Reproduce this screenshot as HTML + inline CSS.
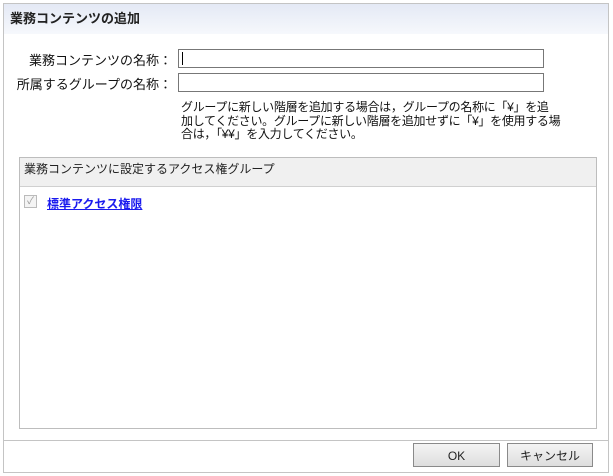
<!DOCTYPE html>
<html><head><meta charset="utf-8"><style>
body{margin:0;width:613px;height:476px;background:#fff;font-family:"Liberation Sans","Noto Sans CJK JP",sans-serif;font-size:12px;color:#222;position:relative;overflow:hidden}
.a{position:absolute}
.outer{left:3px;top:3px;width:604px;height:468px;border:1px solid #c4c4c4}
.title{left:4px;top:4px;width:604px;height:30px;background:linear-gradient(#e4e9f5,#f6f8fc);font-weight:bold;font-size:13px;line-height:30px;padding-left:6px;box-sizing:border-box}
.lbl{text-align:right;width:172px;left:0;font-size:13px;color:#111}
.inp{left:178px;width:364px;height:17px;border:1px solid #777;background:#fff}
.help{left:181px;top:101px;font-size:12px;line-height:13.5px;letter-spacing:-0.3px;color:#111}
.box{left:19px;top:157px;width:576px;height:270px;border:1px solid #bdbdbd}
.bh{left:20px;top:158px;width:576px;height:29px;background:#f0f0f0;border-bottom:1px solid #d0d0d0;line-height:22px;padding-left:4px;box-sizing:border-box;font-size:12px}
.foot{left:4px;top:440px;width:604px;border-top:1px solid #c4c4c4}
.btn{top:443px;height:24px;border:1px solid #8a8a8a;background:linear-gradient(#f4f4f4,#dedede);text-align:center;line-height:24px;font-size:12px;box-sizing:border-box}
</style></head><body>
<div class="a outer"></div>
<div class="a title">業務コンテンツの追加</div>
<div class="a lbl" style="top:50px">業務コンテンツの名称：</div>
<div class="a inp" style="top:49px"><div style="position:absolute;left:3px;top:2px;width:1px;height:13px;background:#000"></div></div>
<div class="a lbl" style="top:74px">所属するグループの名称：</div>
<div class="a inp" style="top:73px"></div>
<div class="a help">グループに新しい階層を追加する場合は，グループの名称に「¥」を追<br>加してください。グループに新しい階層を追加せずに「¥」を使用する場<br>合は，「¥¥」を入力してください。</div>
<div class="a box"></div>
<div class="a bh">業務コンテンツに設定するアクセス権グループ</div>
<div class="a" style="left:24px;top:195px;width:11px;height:11px;border:1px solid #bbb;background:#f4f4f4;color:#999;font-size:10px;line-height:11px;text-align:center">✓</div>
<div class="a" style="left:47px;top:195px;color:#1a1aee;font-weight:bold;text-decoration:underline;font-size:12px">標準アクセス権限</div>
<div class="a foot"></div>
<div class="a btn" style="left:413px;width:87px">OK</div>
<div class="a btn" style="left:507px;width:86px">キャンセル</div>
</body></html>
